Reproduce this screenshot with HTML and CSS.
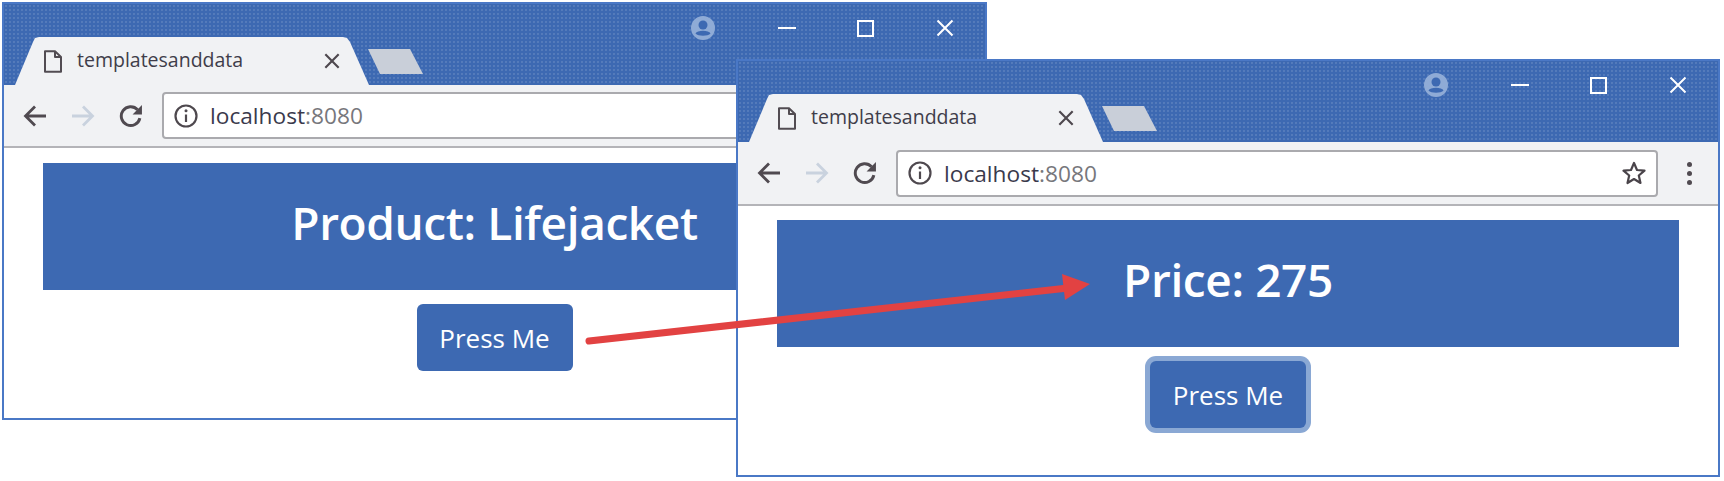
FILE: index.html
```html
<!DOCTYPE html>
<html lang="en">
<head>
    <meta charset="UTF-8">
    <title>templatesanddata</title>
    <link rel="stylesheet" href="styles.css">
</head>
<body>
    <svg class="sprite" aria-hidden="true">
        <symbol id="i-file" viewBox="0 0 19 23"><path d="M2 1.2H12L18 7V21.8H2Z M12 1.2V7H18"/></symbol>
        <symbol id="i-close" viewBox="0 0 18 18"><path d="M1.5 1.5L16.5 16.5M16.5 1.5L1.5 16.5"/></symbol>
        <symbol id="i-back" viewBox="0 0 24 24"><path d="M23 12H2.5M12 2.5L2.5 12L12 21.5"/></symbol>
        <symbol id="i-forward" viewBox="0 0 24 24"><path d="M1 12H21.5M12 2.5L21.5 12L12 21.5"/></symbol>
        <symbol id="i-reload" viewBox="2 1 23 23"><path d="M22 14.500A9 9 0 1 1 19.800 6.500"/><path class="solid" d="M24 2V11H15Z"/></symbol>
        <symbol id="i-info" viewBox="0 0 24 24"><circle cx="12" cy="12" r="10.500"/><path d="M12 10.500V18"/><circle class="solid" cx="12" cy="6.800" r="1.500"/></symbol>
        <symbol id="i-star" viewBox="0 0 24 24"><path d="M12 2L15 9L22.500 9.600L16.800 14.500L18.500 22L12 18L5.500 22L7.200 14.500L1.500 9.600L9 9Z"/></symbol>
        <symbol id="i-user" viewBox="0 0 24 24"><circle class="avatar-bg" cx="12" cy="12" r="12"/><circle class="avatar-cut" cx="12" cy="9" r="4.500"/><path class="avatar-cut" d="M4.500 17.500C6 13.800 18 13.800 19.500 17.500C17 20.500 7 20.500 4.500 17.500Z"/></symbol>
    </svg>

    <div class="window window-first">
        <div class="titlebar">
            <div class="tab">
                <svg class="tab-file"><use href="#i-file"/></svg>
                <span class="tab-title">templatesanddata</span>
                <svg class="tab-close"><use href="#i-close"/></svg>
            </div>
            <div class="newtab"></div>
            <div class="controls">
                <svg class="ctl-user"><use href="#i-user"/></svg>
                <span class="ctl-min"></span>
                <span class="ctl-max"></span>
                <svg class="ctl-close"><use href="#i-close"/></svg>
            </div>
        </div>
        <div class="toolbar">
            <svg class="nav"><use href="#i-back"/></svg>
            <svg class="nav nav-off"><use href="#i-forward"/></svg>
            <svg class="nav"><use href="#i-reload"/></svg>
            <div class="omnibox">
                <svg class="info"><use href="#i-info"/></svg>
                <span class="url">localhost<span class="port">:8080</span></span>
                <svg class="star"><use href="#i-star"/></svg>
            </div>
            <div class="menu"><i></i><i></i><i></i></div>
        </div>
        <div class="page">
            <h1 class="banner">Product: Lifejacket</h1>
            <button class="btn">Press Me</button>
        </div>
    </div>

    <div class="window window-second">
        <div class="titlebar">
            <div class="tab">
                <svg class="tab-file"><use href="#i-file"/></svg>
                <span class="tab-title">templatesanddata</span>
                <svg class="tab-close"><use href="#i-close"/></svg>
            </div>
            <div class="newtab"></div>
            <div class="controls">
                <svg class="ctl-user"><use href="#i-user"/></svg>
                <span class="ctl-min"></span>
                <span class="ctl-max"></span>
                <svg class="ctl-close"><use href="#i-close"/></svg>
            </div>
        </div>
        <div class="toolbar">
            <svg class="nav"><use href="#i-back"/></svg>
            <svg class="nav nav-off"><use href="#i-forward"/></svg>
            <svg class="nav"><use href="#i-reload"/></svg>
            <div class="omnibox">
                <svg class="info"><use href="#i-info"/></svg>
                <span class="url">localhost<span class="port">:8080</span></span>
                <svg class="star"><use href="#i-star"/></svg>
            </div>
            <div class="menu"><i></i><i></i><i></i></div>
        </div>
        <div class="page">
            <h1 class="banner">Price: 275</h1>
            <button class="btn btn-focus">Press Me</button>
        </div>
    </div>

    <svg class="arrow" viewBox="0 0 1724 481">
        <path class="arrow-line" d="M589 341L1068 288"/>
        <path class="arrow-head" d="M1062 274L1090 284L1065 300Z"/>
    </svg>
</body>
</html>
```

FILE: styles.css
```css
body {
    font-family: 'Open Sans', 'Noto Sans', sans-serif;
    margin: 0;
    width: 1724px;
    height: 481px;
    overflow: hidden;
    position: relative;
    background-color: #fff;
}
.sprite {
    position: absolute;
    width: 0;
    height: 0;
}

/* the two browser windows sit on a free canvas */
.window {
    position: absolute;
    box-sizing: border-box;
    height: 418px;
    border: 2px solid #4a78c6;
    background-color: #fff;
    display: flex;
    flex-direction: column;
}
.window-first {
    left: 2px;
    top: 2px;
    width: 985px;
}
.window-second {
    left: 736px;
    top: 59px;
    width: 984px;
}

.titlebar {
    height: 81px;
    flex: none;
    display: flex;
    background-color: #3d69b2;
    background-image: radial-gradient(rgba(255, 255, 255, 0.2) 0.5px, transparent 1px);
    background-size: 4px 4px;
}
.tab {
    width: 354px;
    height: 48px;
    margin-left: 11px;
    padding: 0 29px 0 28px;
    box-sizing: border-box;
    align-self: flex-end;
    flex: none;
    display: flex;
    align-items: center;
    background-color: #f1f2f4;
    clip-path: polygon(0 100%, 18px 5px, 20px 1px, 24px 0, 328px 0, 332px 1px, 335px 5px, 100% 100%);
}
.tab-file {
    width: 19px;
    height: 23px;
    fill: none;
    stroke: #524c52;
    stroke-width: 2;
    stroke-linejoin: round;
}
.tab-title {
    flex: 1;
    margin: 0 0 3px 15px;
    font-size: 19.500px;
    color: #3f3d4a;
}
.tab-close {
    width: 16px;
    height: 16px;
    fill: none;
    stroke: #4e484e;
    stroke-width: 2.400;
}
.newtab {
    width: 55px;
    height: 25px;
    margin: 0 0 11px -1px;
    align-self: flex-end;
    flex: none;
    background-color: #c9cfd9;
    clip-path: polygon(0 0, 42px 0, 100% 100%, 12px 100%);
}
.controls {
    margin-left: auto;
    height: 48px;
    padding-right: 31px;
    flex: none;
    display: flex;
    align-items: center;
}
.ctl-user {
    width: 24px;
    height: 24px;
}
.avatar-bg {
    fill: #8fabd6;
}
.avatar-cut {
    fill: #3d69b2;
}
.ctl-min {
    width: 18px;
    height: 2px;
    margin-left: 63px;
    background-color: #fff;
}
.ctl-max {
    width: 17px;
    height: 17px;
    box-sizing: border-box;
    margin-left: 61px;
    border: 2px solid #fff;
}
.ctl-close {
    width: 18px;
    height: 18px;
    margin-left: 62px;
    fill: none;
    stroke: #fff;
    stroke-width: 2;
}

.toolbar {
    height: 63px;
    flex: none;
    box-sizing: border-box;
    padding: 0 26px 0 19px;
    display: flex;
    align-items: center;
    background-color: #f1f2f4;
    border-bottom: 2px solid #b4b4b8;
}
.window-second .toolbar {
    height: 64px;
}
.nav {
    width: 24px;
    height: 24px;
    margin-right: 24px;
    flex: none;
    fill: none;
    stroke: #504a50;
    stroke-width: 2.800;
}
.nav-off {
    stroke: #c9d2de;
}
.solid {
    fill: #504a50;
    stroke: none;
}
.omnibox {
    flex: 1;
    height: 47px;
    margin-left: -5px;
    padding: 0 10px;
    box-sizing: border-box;
    display: flex;
    align-items: center;
    background-color: #fff;
    border: 2px solid #aaaaae;
    border-radius: 4px;
}
.info {
    width: 24px;
    height: 24px;
    fill: none;
    stroke: #4e484e;
    stroke-width: 2.200;
}
.url {
    flex: 1;
    margin-left: 12px;
    font-size: 22.700px;
    color: #3a3a4c;
}
.port {
    color: #77777c;
}
.star {
    width: 24px;
    height: 24px;
    fill: none;
    stroke: #4a444a;
    stroke-width: 2.200;
    stroke-linejoin: round;
}
.menu {
    margin-left: 29px;
    flex: none;
    display: flex;
    flex-direction: column;
    gap: 4px;
}
.menu i {
    width: 5px;
    height: 5px;
    border-radius: 50%;
    background-color: #504a50;
}

.page {
    padding: 15px 39px 0;
    display: flex;
    flex-direction: column;
    align-items: center;
}
.window-second .page {
    padding-top: 14px;
}
.banner {
    align-self: stretch;
    height: 127px;
    margin: 0 0 14px;
    padding-top: 29px;
    box-sizing: border-box;
    text-align: center;
    font-size: 46px;
    letter-spacing: -0.4px;
    line-height: 60px;
    font-weight: 600;
    color: #fff;
    background-color: #3d69b2;
}
.btn {
    width: 156px;
    height: 67px;
    padding: 0;
    border: none;
    border-radius: 6px;
    font-family: inherit;
    font-size: 26px;
    color: #fff;
    background-color: #3d69b2;
}
.btn-focus {
    box-shadow: 0 0 0 5px #8aa8d4;
}

.arrow {
    position: absolute;
    left: 0;
    top: 0;
    width: 1724px;
    height: 481px;
}
.arrow-line {
    fill: none;
    stroke: #e24242;
    stroke-width: 7;
    stroke-linecap: round;
}
.arrow-head {
    fill: #e24242;
}
```
